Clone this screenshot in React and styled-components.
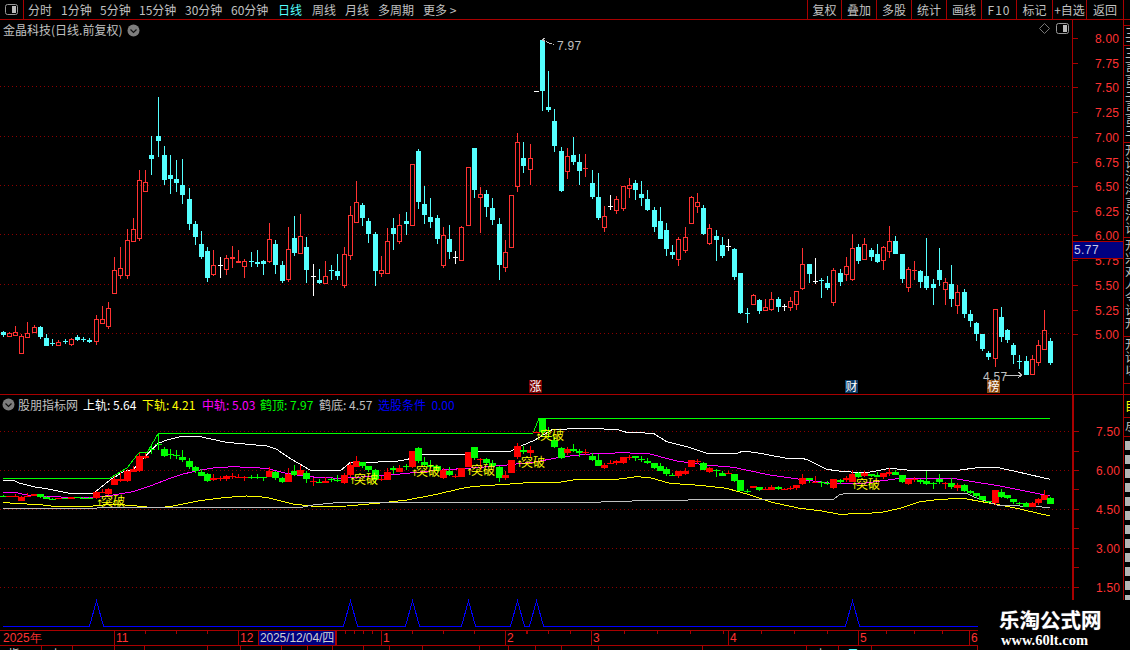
import React from 'react'
import styled, { createGlobalStyle } from 'styled-components'

// colours of the terminal
const RED_LINE = '#a80000'
const RED_TEXT = '#ff3232'
const CYAN = '#54ffff'

const GlobalStyle = createGlobalStyle`
  html, body { margin: 0; padding: 0; background: #000; }
  body { font-family: 'Noto Sans CJK SC', 'Liberation Sans', sans-serif; font-size: 12px; }
  svg { display: block; }
`

const Screen = styled.div`
  position: relative; width: 1130px; height: 650px;
  display: flex; flex-direction: column;
  background: #000; color: #c0c0c0; overflow: hidden;
`
const Toolbar = styled.div`
  display: flex; align-items: stretch; height: 19px; flex: none;
  border-bottom: 1px solid ${RED_LINE};
`
const ToggleBox = styled.div`
  width: 23px; flex: none; border-right: 1px solid ${RED_LINE};
  display: flex; align-items: center; justify-content: center;
`
const Tabs = styled.div`
  display: flex; align-items: center; padding-left: 4px; flex: 1;
`
const Tab = styled.span`
  width: ${p => p.$w}px; flex: none; text-align: left; line-height: 19px; white-space: nowrap;
  color: ${p => (p.$active ? CYAN : '#c0c0c0')};
  font-size: 12px;
`
const ToolButtons = styled.div`
  display: flex; width: 323px; flex: none; margin-right: 0;
`
const ToolButton = styled.div`
  width: ${p => p.$w}px; flex: none; line-height: 19px; text-align: center; white-space: nowrap;
  border-left: 1px solid ${RED_LINE}; box-sizing: border-box;
  letter-spacing: ${p => (p.$wide ? '1px' : 0)};
`
const ToolEnd = styled.div`
  flex: 1; border-left: 1px solid ${RED_LINE};
`
const Body = styled.div`
  display: flex; flex: 1; min-height: 0;
`
const Panels = styled.div`
  width: 1123px; flex: none; display: flex; flex-direction: column;
`
const ChartRow = styled.div`
  display: flex; height: ${p => p.$h}px; flex: none; box-sizing: border-box;
  border-bottom: ${p => (p.$line ? `1px solid ${RED_LINE}` : 'none')};
`
const ChartPane = styled.div`
  position: relative; width: 1072px; flex: none;
`
const AxisPane = styled.div`
  position: relative; flex: 1;
  border-left: ${p => p.$thick}px solid ${RED_LINE};
`
const PriceTag = styled.div`
  position: absolute; left: 0; right: 0; top: 221px; height: 16px;
  background: #000080; border-top: 1px solid ${RED_LINE}; border-bottom: 1px solid ${RED_LINE};
  color: #c8c8e8; font: 12px/16px 'Liberation Sans', sans-serif; letter-spacing: 0.4px; padding-left: 1px;
`
const StockTitle = styled.div`
  position: absolute; left: 3px; top: 1px; display: flex; align-items: center; gap: 5px;
  line-height: 18px; color: #c0c0c0; white-space: nowrap;
`
const CornerTools = styled.div`
  position: absolute; right: 3px; top: 3px; display: flex; align-items: center; gap: 6px;
`
const Legend = styled.div`
  position: absolute; left: 2px; top: 1px; display: flex; align-items: center; line-height: 17px; white-space: nowrap;
`
const LegendItem = styled.span`
  width: ${p => p.$w}px; flex: none; color: ${p => p.$c};
`
const TimeAxis = styled.div`
  display: flex; height: 16px; flex: none; box-sizing: border-box;
  border-top: 1px solid ${RED_LINE}; border-bottom: 1px solid ${RED_LINE};
  font: 12px/15px 'Liberation Sans', sans-serif; color: ${RED_TEXT};
`
const TimeCell = styled.div`
  width: ${p => p.$w}px; flex: none; box-sizing: border-box; padding-left: ${p => (p.$first ? 3 : 1)}px; white-space: nowrap;
  border-left: ${p => (p.$first ? 'none' : `1px solid ${RED_LINE}`)};
  background: ${p => p.$tick
    ? `repeating-linear-gradient(90deg, transparent 0 ${p.$tick - 1}px, ${RED_LINE} ${p.$tick - 1}px ${p.$tick}px) 0 0 / 100% 3px no-repeat`
    : 'none'};
`
const CursorDate = styled.div`
  width: 78px; flex: none; box-sizing: border-box; text-align: center; white-space: nowrap;
  background: #000080; color: #d0d0d0; border-left: 1px solid ${RED_LINE}; border-right: 1px solid ${RED_LINE};
  font-family: 'Liberation Sans', 'Noto Sans CJK SC', sans-serif; letter-spacing: -0.1px;
`
const StatusRow = styled.div`
  display: flex; flex: 1; overflow: hidden; width: 978px;
`
const StatusCell = styled.div`
  width: ${p => p.$w}px; flex: none; box-sizing: border-box; padding-left: 8px;
  border-right: 1px solid ${RED_LINE}; line-height: 16px; white-space: nowrap;
  color: ${p => p.$c || '#d0d0d0'};
`
const SideStrip = styled.div`
  flex: 1; display: flex; flex-direction: column; overflow: hidden;
  border-left: 1px solid ${RED_LINE};
`
const SideBlock = styled.div`
  height: ${p => p.$h}px; flex: none; box-sizing: border-box; overflow: hidden;
  border-bottom: 1px solid ${RED_LINE};
  color: ${p => p.$c || '#c0c0c0'}; padding-left: 1px; width: 13px;
  line-height: ${p => p.$lh || 13}px; font-size: 12px; word-break: break-all;
`
// the numbers of the cut-off side list: only their left edge is on the screen
const SideDigits = styled.div`
  flex: 1; margin-left: 1px; margin-top: 4px;
  background: repeating-linear-gradient(180deg, #b4b4b4 0 9px, transparent 9px 14px);
`
const Watermark = styled.div`
  position: absolute; left: 978px; top: 600px; right: 0; bottom: 0; background: #000;
  display: flex; flex-direction: column; align-items: flex-start; padding: 6px 0 0 21px; box-sizing: border-box;
  color: #fff; white-space: nowrap;
`
const WatermarkName = styled.div`
  font-size: 20.5px; font-weight: 700; line-height: 26px; text-shadow: 0 0 1px #888;
`
const WatermarkUrl = styled.div`
  font: 700 14.5px/16px 'Liberation Serif', serif; margin-left: 2px;
`

// candles: [type, top, bottom, high, low], values read off 3x crops, offset gives page y
const seg = (off, rows) => rows.map(([t, a, b, h, l]) => [t, off + a / 3, off + b / 3, off + h / 3, off + l / 3])
const CANDLES = [
  ...seg(90, [
    ['c',726,735,723,740],['r',728,737,726,740],['r',725,734,709,738],['r',737,788,733,788],['r',730,740,697,740],
    ['r',712,725,705,725],['c',712,740,708,747],['c',745,767,732,767],['c',760,760,748,767],['r',755,764,751,767],
    ['c',754,754,747,762],['r',746,761,744,768],['c',741,750,736,752],['c',747,747,742,755],['c',750,755,744,760],
    ['r',686,754,676,764],['r',688,698,648,700],['r',655,707,636,716],['r',541,608,502,608],['r',535,554,472,567],
    ['r',451,554,418,566],['r',418,452,385,452],['r',271,443,240,452],['r',277,302,240,306],['c',195,207,138,255],
    ['c',138,153,21,201],['c',195,270,168,285],['c',255,267,195,312],['c',267,279,210,306],['c',285,315,207,342],
    ['c',327,402,294,420],['c',402,441,393,465],['c',462,501,423,507],['c',483,564,472,576],['r',526,551,480,558],
    ['w',525,525,501,564],['r',505,536,495,555],['r',500,506,468,534],['r',514,518,480,520],['r',514,527,508,564],
    ['c',514,514,487,531],['c',517,522,480,531],['c',514,522,510,555],['r',448,512,399,518],['c',462,525,450,552],
  ]),
  ...seg(30, [
    ['c',705,753,693,759],['r',658,746,591,755],['c',624,669,558,678],['r',619,669,552,669],['c',651,720,621,759],
    ['w',739,739,702,798],['c',750,759,717,762],['r',739,758,693,758],['c',721,721,705,750],['c',723,738,672,750],
    ['r',673,764,651,774],['r',556,674,528,690],['r',517,575,453,575],['c',525,564,519,588],['c',573,612,564,639],
    ['c',612,723,606,768],['r',721,729,678,741],['r',634,728,594,732],['c',594,612,564,660],['r',586,632,552,642],
    ['c',573,582,546,615],['r',403,584,403,588],['c',363,516,357,537],['c',522,555,468,582],['c',561,576,504,594],
    ['c',564,627,555,642],['r',616,704,591,714],['c',627,666,585,687],['w',682,682,663,702],['r',592,689,588,689],
    ['r',412,584,412,584],['c',354,480,354,504],['r',493,502,472,609],['c',492,531,480,561],['c',534,570,504,585],
    ['c',582,705,564,750],['r',667,710,630,726],['r',496,650,496,652],['r',337,467,309,486],['c',384,408,336,429],
    ['r',385,416,342,466],['w',184,184,184,184],['c',30,183,30,243],['c',231,240,123,246],['c',273,348,237,366],
  ]),
  ...seg(120, [
    ['c',93,213,81,216],['r',109,152,84,177],['c',105,126,51,135],['c',126,153,102,195],['r',145,148,102,171],
    ['c',189,231,150,237],['c',231,294,159,300],['r',289,320,259,336],['w',259,259,225,270],['r',238,269,228,282],
    ['r',199,263,199,273],['r',196,203,174,234],['c',189,210,180,240],['c',222,234,183,258],['c',237,270,210,273],
    ['c',270,321,261,336],['c',303,357,261,357],['c',330,387,309,408],['c',396,405,375,417],['r',358,416,352,438],
    ['r',352,389,321,399],['r',232,308,229,308],['r',247,257,219,279],['c',264,342,255,345],['r',325,368,312,375],
    ['c',348,360,330,423],['c',375,408,351,414],['w',379,379,357,393],['c',387,471,384,480],['c',459,579,459,582],
    ['c',580,580,564,609],['r',526,551,523,551],['c',540,573,537,582],['r',562,569,537,573],['r',538,566,516,573],
    ['c',537,561,531,576],['w',558,558,552,573],['r',544,560,531,573],['r',514,551,514,570],['r',433,503,384,510],
    ['c',432,462,432,489],['w',484,484,414,492],['c',481,481,474,534],['c',489,504,468,510],
  ]),
  ...seg(210, [
    ['r',181,277,175,287],['c',189,216,177,228],['r',168,193,141,213],['r',115,206,72,212],['c',111,153,102,162],
    ['r',103,147,84,150],['c',120,141,114,153],['c',132,156,102,159],['r',112,149,108,180],['r',94,124,48,144],
    ['c',93,132,78,132],['c',132,207,132,219],['r',178,230,172,246],['r',179,182,153,210],['c',183,216,180,234],
    ['c',198,234,84,240],['c',222,234,207,285],['c',180,210,114,228],['r',217,236,205,285],['c',222,267,165,291],
    ['r',247,284,225,312],['c',246,312,237,324],['c',312,333,300,351],['c',339,372,336,393],['c',372,417,372,423],
    ['c',429,441,423,450],['r',298,445,298,471],['c',321,381,291,396],['c',360,390,357,399],['c',405,435,399,462],
    ['c',452,452,435,477],['c',453,495,438,495],['r',448,491,435,495],['r',406,455,390,468],['r',361,416,300,419],
    ['c',393,459,384,465],
  ]),
]

const candleX = i => 3 + Math.floor(i * 6.2)
const subY = y => 496 - (333.3 - y) * 0.2637

// joins points read off 3x crops into one polyline
const trace = (...parts) => parts.flatMap(([ox, oy, pts]) =>
  pts.map(([x, y]) => `${ox + x / 3},${oy + y / 3}`)).join(' ')

const UPPER = trace(
  [0, 380, [[9,300],[40,300],[60,310],[100,320],[150,328],[210,340],[280,340],[330,300],[370,275],[400,268],[440,225],[475,190],[500,180],[540,170],[600,170],[680,187],[800,198],[830,208],[870,235],[930,270],[1020,273],[1050,248],[1180,245],[1225,238],[1240,222],[1400,225]]],
  [480, 380, [[0,214],[90,214],[130,195],[165,180],[215,150],[290,145],[410,148],[440,157],[520,160],[560,185],[620,200],[680,220],[770,220],[790,213],[830,218],[920,235],[960,235]]],
  [800, 380, [[20,238],[80,268],[130,275],[200,278],[270,265],[320,270],[480,270],[540,262],[590,262],[650,275],[750,298]]],
)
const MIDDLE = trace(
  [0, 380, [[9,338],[48,338],[80,345],[200,352],[280,352],[340,345],[400,335],[450,318],[510,295],[550,282],[600,270],[640,264],[700,260],[800,265],[850,278],[920,290],[1020,295],[1100,290],[1200,282],[1300,272],[1440,262]]],
  [480, 380, [[80,255],[170,245],[250,230],[330,222],[430,218],[510,222],[590,243],[680,255],[760,262],[870,285],[960,298]]],
  [800, 380, [[110,312],[190,310],[300,295],[470,297],[600,318],[750,348]]],
)
const LOWER = trace(
  [0, 380, [[9,368],[50,370],[130,375],[170,380],[280,378],[340,372],[410,378],[470,384],[520,378],[600,362],[680,352],[740,348],[800,352],[880,372],[950,380],[1040,378],[1150,368],[1220,360],[1300,345],[1400,322],[1440,318]]],
  [480, 380, [[120,310],[150,307],[230,308],[290,298],[410,298],[470,290],[510,293],[570,310],[660,316],[740,325],[800,342],[880,368],[960,385]]],
  [800, 380, [[60,392],[120,403],[240,398],[300,385],[360,365],[420,358],[490,355],[600,375],[650,385],[750,408]]],
)
const BOTTOM = trace(
  [0, 380, [[9,385],[280,385],[300,383],[900,383],[940,375],[1010,368],[1440,368]]],
  [480, 380, [[360,368],[365,365],[450,365],[460,361],[960,358]]],
  [800, 380, [[100,358],[120,343],[150,340],[500,340],[520,350],[590,375],[750,382]]],
)
const TOP_LINE = '3,478.7 109,478.7 127,468 139,452.7 147,452.7 158.3,433.3 533,433.3 539,418.3 1050,418.3'

const SIGNALS = [15, 56, 66, 75, 83, 86, 137]
const signalPoints = () => {
  const pts = ['3,626']
  SIGNALS.forEach(i => {
    const x = candleX(i) + 0.5
    pts.push(`${x - 7},626`, `${x},601`, `${x + 7},626`)
  })
  pts.push('978,626')
  return pts.join(' ')
}

const BREAKS = [[98, 506], [351, 484], [413, 476], [468, 475], [518, 467], [537, 440], [853, 489]]

const MAIN_GRID = [86, 136, 185, 234, 284, 333]
const SUB_GRID = [431, 470, 509, 548, 587]

const MAIN_SCALE = [['8.00',38],['7.75',63],['7.50',87],['7.25',112],['7.00',137],['6.75',162],['6.50',186],['6.25',211],['6.00',235],['5.75',260],['5.50',285],['5.25',310],['5.00',334]]
const SUB_SCALE = [['7.50',431],['6.00',470],['4.50',509],['3.00',548],['1.50',587]]
const SUB_TICKS = [431, 451, 470, 489, 509, 528, 548, 567, 587]

const Grid = ({ id, rows }) => (
  <>
    <defs>
      <pattern id={id} width="4" height="1" patternUnits="userSpaceOnUse">
        <rect width="1" height="1" fill="#8c0000" />
      </pattern>
    </defs>
    {rows.map(y => <rect key={y} x="0" y={y} width="1072" height="1" fill={`url(#${id})`} />)}
  </>
)

const Candle = ({ i, d, mono }) => {
  const [t, top, bot, hi, lo] = d
  const x = candleX(i)
  const map = mono ? subY : v => v
  const a = Math.round(map(top)), b = Math.round(map(bot))
  const h = Math.round(map(hi)), l = Math.round(map(lo))
  const color = mono
    ? (t === 'c' ? '#00ff00' : '#ff0000')
    : (t === 'c' ? CYAN : t === 'w' ? '#ffffff' : RED_TEXT)
  const height = Math.max(b - a, 1)
  if (!mono && t === 'r' && height > 2) {
    return (
      <g fill={color}>
        <rect x={x} y={h} width="1" height={Math.max(a - h, 0)} />
        <rect x={x} y={b} width="1" height={Math.max(l - b, 0)} />
        <rect x={x - 1.5} y={a + 0.5} width="4" height={height} fill="none" stroke={color} />
      </g>
    )
  }
  return (
    <g fill={color}>
      <rect x={x} y={h} width="1" height={Math.max(l - h, 1)} />
      <rect x={mono ? x - 3 : x - 2} y={a} width={mono ? 7 : 5} height={height} />
    </g>
  )
}

const Badge = ({ x, bg, label }) => (
  <g>
    <rect x={x} y="380" width="13" height="13" fill={bg} />
    <text x={x + 0.5} y="391" fontSize="12" fill="#fff">{label}</text>
  </g>
)

const MainChart = () => (
  <svg width="1072" height="374" viewBox="0 20 1072 374" shapeRendering="crispEdges">
    <Grid id="mainGrid" rows={MAIN_GRID} />
    {CANDLES.map((d, i) => <Candle key={i} i={i} d={d} />)}
    <polyline points="542,40 554,45" fill="none" stroke="#c0c0c0" strokeDasharray="3 1" />
    <polyline points="542,40 545,38" fill="none" stroke="#c0c0c0" />
    <text x="557" y="50" fontSize="12" fill="#c0c0c0" fontFamily="Liberation Sans" letterSpacing="0.3">7.97</text>
    <text x="983" y="381" fontSize="12" fill="#c0c0c0" fontFamily="Liberation Sans" letterSpacing="0.3">4.57</text>
    <polyline points="1005,375 1022,375" fill="none" stroke="#c0c0c0" />
    <polyline points="1018,372 1022,375 1018,378" fill="none" stroke="#c0c0c0" />
    <Badge x={529} bg="#7a0000" label="涨" />
    <Badge x={845} bg="#0a3a66" label="财" />
    <Badge x={987} bg="#8a4a10" label="榜" />
  </svg>
)

const SubChart = () => (
  <svg width="1072" height="235" viewBox="0 395 1072 235" shapeRendering="crispEdges">
    <Grid id="subGrid" rows={SUB_GRID} />
    <g fill="none">
      <polyline points={UPPER} stroke="#ffffff" />
      <polyline points={MIDDLE} stroke="#ff00ff" />
      <polyline points={LOWER} stroke="#ffff00" />
      <polyline points={BOTTOM} stroke="#c0c0c0" />
      <polyline points={TOP_LINE} stroke="#00ff00" />
      <polyline points={signalPoints()} stroke="#0000ff" />
    </g>
    {CANDLES.map((d, i) => <Candle key={i} i={i} d={d} mono />)}
    {BREAKS.map(([x, y]) => (
      <text key={x} y={y} fontSize="12" fill="#ffff00">
        <tspan x={x - 2} fontSize="9" fontFamily="DejaVu Sans">↑</tspan><tspan x={x + 3}>突破</tspan>
      </text>
    ))}
  </svg>
)

const ScaleAxis = ({ width, top, height, scale, ticks }) => (
  <svg width={width} height={height} viewBox={`0 ${top} ${width} ${height}`} shapeRendering="crispEdges">
    {ticks.map(y => <rect key={y} x="0" y={y} width="5" height="1" fill={RED_LINE} />)}
    {scale.map(([label, y]) => (
      <text key={label} x="22" y={y + 4.5} fontSize="12" fill={RED_TEXT} fontFamily="Liberation Sans" letterSpacing="0.2">{label}</text>
    ))}
  </svg>
)

const PanelToggle = () => (
  <svg width="13" height="11" viewBox="0 0 13 11">
    <rect x="0.5" y="0.5" width="12" height="10" rx="2" fill="none" stroke="#999" />
    <rect x="7" y="2" width="4" height="7" fill="#bbb" />
  </svg>
)

const ChevronDot = () => (
  <svg width="13" height="13" viewBox="0 0 13 13">
    <circle cx="6.5" cy="6.5" r="6" fill="#7d7d7d" />
    <polyline points="3.5,5.5 6.5,8.5 9.5,5.5" fill="none" stroke="#111" strokeWidth="1.2" />
  </svg>
)

const Diamond = () => (
  <svg width="11" height="11" viewBox="0 0 11 11">
    <polygon points="5.5,0.5 10.5,5.5 5.5,10.5 0.5,5.5" fill="none" stroke="#777" />
  </svg>
)

const TABS = [['分时',33],['1分钟',39],['5分钟',39],['15分钟',46],['30分钟',46],['60分钟',47],['日线',34,true],['周线',33],['月线',33],['多周期',45],['更多 >',40]]
const BUTTONS = [['复权',34],['叠加',35],['多股',35],['统计',35],['画线',35],['F10',35,true],['标记',36],['+自选',34],['返回',37]]
const TIME_CELLS = [['2025年',114,0,true],['11',124,31],['12',20,0]]
const TIME_CELLS_AFTER = [['',45,9],['1',124,31],['2',86,21.5],['3',137,33],['4',130,33],['5',111,28],['6',40,0]]
const STATUS = [
  [42,'指'],[31,'上'],[42],[30],[63],[33],[41],[26],[25],[31],[26],[33],[57],[29],[27],[26],[37],
  [104],[104],[32,'上'],[33,'日',CYAN],[106],
]
const SIDE_TOP = [
  [6, ''], [20, '三三'], [97, '三言言三言言三'], [95, '开计汁洋言汁计'],
  [99, '开兴对人令计开'], [47, '开计以'], [11, ''],
]

export default function App() {
  return (
    <Screen>
      <GlobalStyle />
      <Toolbar>
        <ToggleBox><PanelToggle /></ToggleBox>
        <Tabs>
          {TABS.map(([label, w, active]) => <Tab key={label} $w={w} $active={active}>{label}</Tab>)}
        </Tabs>
        <ToolButtons>
          {BUTTONS.map(([label, w, wide]) => <ToolButton key={label} $w={w} $wide={wide}>{label}</ToolButton>)}
          <ToolEnd />
        </ToolButtons>
      </Toolbar>
      <Body>
        <Panels>
          <ChartRow $h={375} $line>
            <ChartPane>
              <MainChart />
              <StockTitle>金晶科技(日线.前复权)<ChevronDot /></StockTitle>
              <CornerTools><Diamond /><PanelToggle /></CornerTools>
            </ChartPane>
            <AxisPane $thick={1}>
              <ScaleAxis width={50} top={20} height={374} scale={MAIN_SCALE} ticks={MAIN_SCALE.map(s => s[1])} />
              <PriceTag>5.77</PriceTag>
            </AxisPane>
          </ChartRow>
          <ChartRow $h={235}>
            <ChartPane>
              <SubChart />
              <Legend>
                <LegendItem $w={16} $c="#888"><ChevronDot /></LegendItem>
                <LegendItem $w={65} $c="#c0c0c0">股朋指标网</LegendItem>
                <LegendItem $w={59} $c="#ffffff">上轨: 5.64</LegendItem>
                <LegendItem $w={60} $c="#ffff00">下轨: 4.21</LegendItem>
                <LegendItem $w={58} $c="#ff00ff">中轨: 5.03</LegendItem>
                <LegendItem $w={59} $c="#00ff00">鹤顶: 7.97</LegendItem>
                <LegendItem $w={59} $c="#c0c0c0">鹤底: 4.57</LegendItem>
                <LegendItem $w={80} $c="#0000ff">选股条件&nbsp; 0.00</LegendItem>
              </Legend>
            </ChartPane>
            <AxisPane $thick={2}>
              <ScaleAxis width={48} top={395} height={235} scale={SUB_SCALE} ticks={SUB_TICKS} />
            </AxisPane>
          </ChartRow>
          <TimeAxis>
            {TIME_CELLS.map(([label, w, tick, first]) => (
              <TimeCell key={label} $w={w} $tick={tick} $first={first}>{label}</TimeCell>
            ))}
            <CursorDate>2025/12/04/四</CursorDate>
            {TIME_CELLS_AFTER.map(([label, w, tick]) => (
              <TimeCell key={w + label} $w={w} $tick={tick}>{label}</TimeCell>
            ))}
          </TimeAxis>
          <StatusRow>
            {STATUS.map(([w, text, color], i) => <StatusCell key={i} $w={w} $c={color}>{text}</StatusCell>)}
          </StatusRow>
        </Panels>
        <SideStrip>
          {SIDE_TOP.map(([h, text], i) => <SideBlock key={i} $h={h}>{text}</SideBlock>)}
          <SideBlock $h={23} $c="#ffff00" $lh={22}>目</SideBlock>
          <SideBlock $h={19} $lh={18}>尽</SideBlock>
          <SideDigits />
        </SideStrip>
      </Body>
      <Watermark>
        <WatermarkName>乐淘公式网</WatermarkName>
        <WatermarkUrl>www.60lt.com</WatermarkUrl>
      </Watermark>
    </Screen>
  )
}
